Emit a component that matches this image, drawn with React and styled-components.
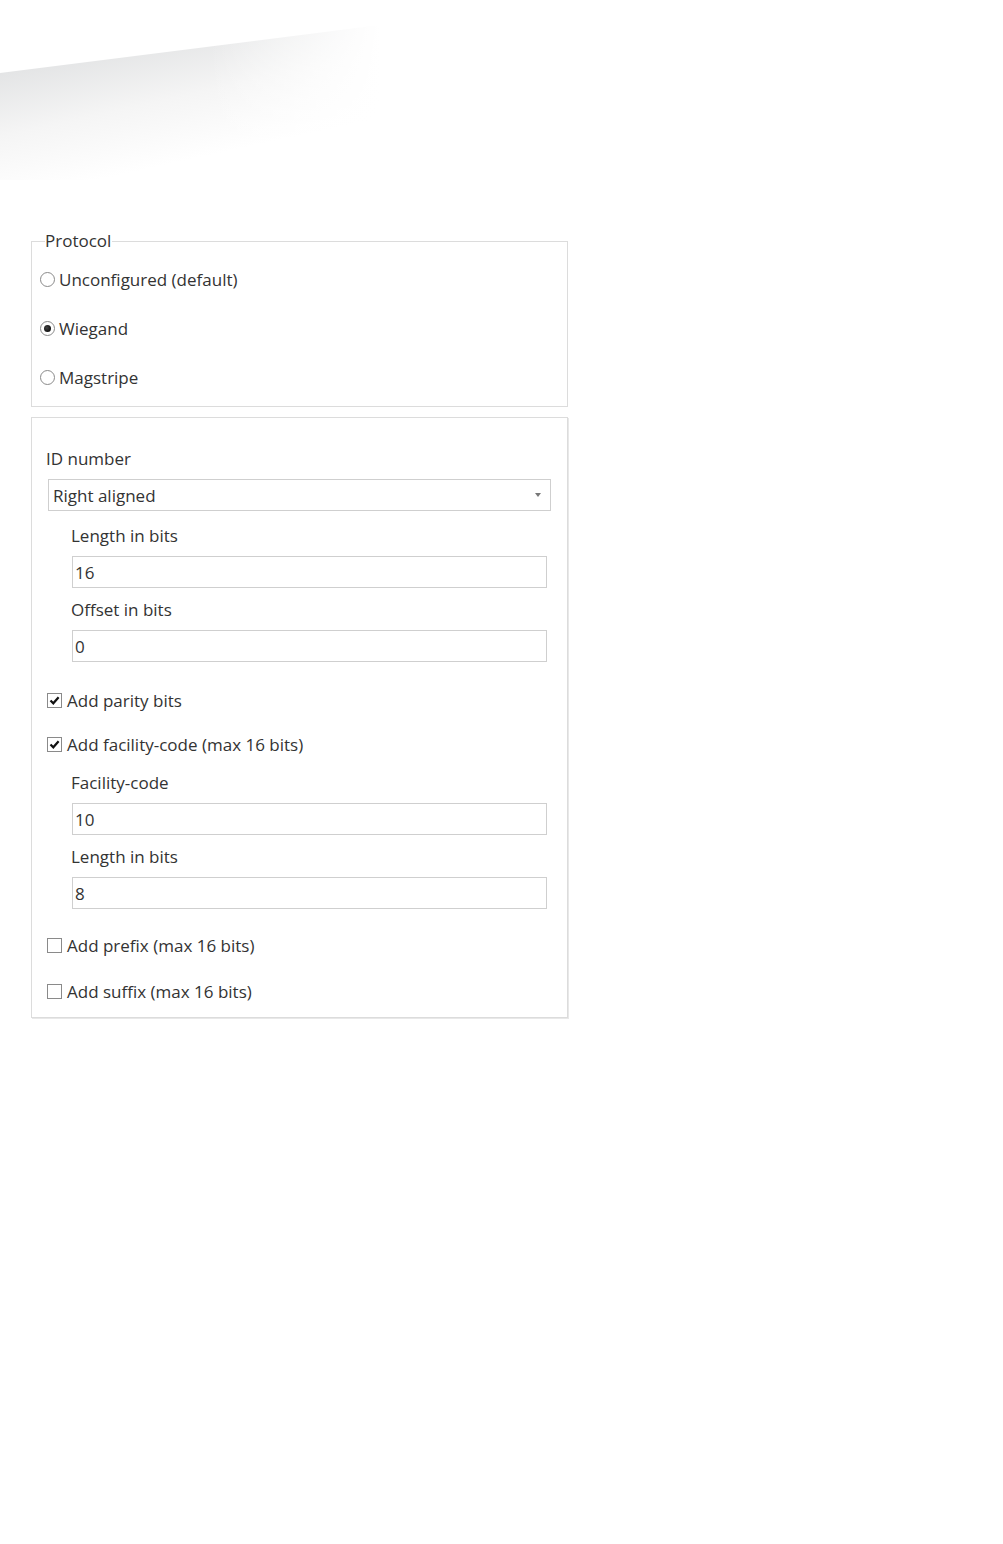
import React from "react";
import styled, { createGlobalStyle } from "styled-components";

const GlobalStyle = createGlobalStyle`
  body {
    margin: 0;
    background: #ffffff;
    font-family: "Open Sans", "Noto Sans", sans-serif;
    color: #333333;
  }
`;

const Page = styled.div`
  width: 1003px;
  min-height: 1544px;
  background: #ffffff;
`;

const Decor = styled.svg`
  display: block;
  width: 420px;
  height: 232px;
`;

const Column = styled.div`
  width: 537px;
  margin-left: 31px;
`;

const Fieldset = styled.fieldset`
  margin: 0;
  padding: 17px 8px 17px;
  border: 1px solid #dcdcdc;
  display: flex;
  flex-direction: column;
  gap: 25px;
`;

const Legend = styled.legend`
  margin-left: 5px;
  padding: 0 1px 0 0;
  font-size: 17px;
  line-height: 18px;
`;

const OptionRow = styled.label`
  display: flex;
  align-items: center;
  height: 24px;
  font-size: 17px;
  gap: 4px;
`;

const Radio = styled.span`
  width: 13px;
  height: 13px;
  border-radius: 50%;
  border: 1px solid #8a8a8a;
  background: #ffffff;
  display: flex;
  align-items: center;
  justify-content: center;
  flex: none;
  &::after {
    content: "";
    display: ${(p) => (p.checked ? "block" : "none")};
    width: 7px;
    height: 7px;
    border-radius: 50%;
    background: radial-gradient(circle at 40% 40%, #444 0%, #111 70%);
  }
`;

const Panel = styled.div`
  margin-top: 10px;
  border: 1px solid #dcdcdc;
  box-shadow: 1px 1px 0 #e8e8e8;
  padding: 29px 16px 14px 14px;
  display: flex;
  flex-direction: column;
`;

const Label = styled.div`
  font-size: 17px;
  line-height: 24px;
  margin-top: ${(p) => p.top || 0}px;
`;

const Select = styled.div`
  margin: 8px 0 0 2px;
  height: 30px;
  border: 1px solid #cfcfcf;
  display: flex;
  align-items: center;
  justify-content: space-between;
  padding: 0 9px 0 4px;
  font-size: 17px;
`;

const Caret = styled.span`
  width: 0;
  height: 0;
  border-left: 3px solid transparent;
  border-right: 3px solid transparent;
  border-top: 4px solid #777;
`;

const Indent = styled.div`
  margin-left: 25px;
  display: flex;
  flex-direction: column;
`;

const Input = styled.div`
  margin: 8px 0 0 1px;
  width: 471px;
  height: 30px;
  border: 1px solid #cfcfcf;
  display: flex;
  align-items: center;
  padding-left: 2px;
  font-size: 17px;
`;

const CheckRow = styled.label`
  display: flex;
  align-items: center;
  height: 24px;
  margin: ${(p) => p.top || 0}px 0 0 1px;
  font-size: 17px;
  gap: 5px;
`;

const Box = styled.span`
  width: 13px;
  height: 13px;
  border: 1px solid #8a8a8a;
  flex: none;
  display: flex;
  align-items: center;
  justify-content: center;
`;

const Check = () => (
  <svg width="11" height="11" viewBox="0 0 11 11">
    <path d="M1.5 5.5 L4.3 8.3 L9.6 2.2" fill="none" stroke="#111" strokeWidth="2.2" />
  </svg>
);

const Checkbox = ({ checked, top, children }) => (
  <CheckRow top={top}>
    <Box>{checked && <Check />}</Box>
    {children}
  </CheckRow>
);

export default function App() {
  return (
    <Page>
      <GlobalStyle />
      <Decor viewBox="0 0 420 232">
        <defs>
          <linearGradient id="sheen" x1="0" y1="0.3" x2="0.35" y2="0.95">
            <stop offset="0" stopColor="#e3e4e5" />
            <stop offset="0.5" stopColor="#f5f5f5" />
            <stop offset="1" stopColor="#ffffff" />
          </linearGradient>
          <linearGradient id="fadeR" x1="0" y1="0" x2="1" y2="0">
            <stop offset="0" stopColor="#ffffff" stopOpacity="0" />
            <stop offset="0.55" stopColor="#ffffff" stopOpacity="0" />
            <stop offset="1" stopColor="#ffffff" stopOpacity="1" />
          </linearGradient>
        </defs>
        <polygon points="0,73 380,25 380,180 0,180" fill="url(#sheen)" />
        <rect x="0" y="0" width="380" height="200" fill="url(#fadeR)" />
      </Decor>
      <Column>
        <Fieldset>
          <Legend>Protocol</Legend>
          <OptionRow>
            <Radio />
            Unconfigured (default)
          </OptionRow>
          <OptionRow>
            <Radio checked />
            Wiegand
          </OptionRow>
          <OptionRow>
            <Radio />
            Magstripe
          </OptionRow>
        </Fieldset>
        <Panel>
          <Label>ID number</Label>
          <Select>
            Right aligned
            <Caret />
          </Select>
          <Indent>
            <Label top={13}>Length in bits</Label>
            <Input>16</Input>
            <Label top={10}>Offset in bits</Label>
            <Input>0</Input>
          </Indent>
          <Checkbox checked top={26}>Add parity bits</Checkbox>
          <Checkbox checked top={20}>Add facility-code (max 16 bits)</Checkbox>
          <Indent>
            <Label top={15}>Facility-code</Label>
            <Input>10</Input>
            <Label top={10}>Length in bits</Label>
            <Input>8</Input>
          </Indent>
          <Checkbox top={24}>Add prefix (max 16 bits)</Checkbox>
          <Checkbox top={22}>Add suffix (max 16 bits)</Checkbox>
        </Panel>
      </Column>
    </Page>
  );
}
